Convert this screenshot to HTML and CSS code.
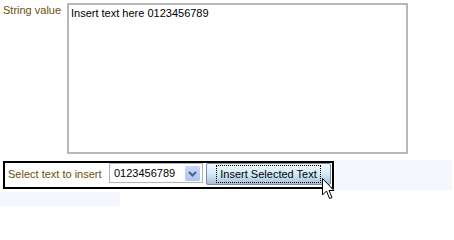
FILE: index.html
```html
<!DOCTYPE html>
<html>
<head>
<meta charset="utf-8">
<link rel="stylesheet" href="styles.css">
</head>
<body>
<div class="page">
  <div class="row1">
    <div class="label top">String value</div>
    <textarea class="area" readonly>Insert text here 0123456789</textarea>
  </div>
  <div class="row2">
    <div class="cell-left">
      <div class="box">
        <div class="label">Select text to insert</div>
        <div class="select">
          <span class="sel-text">0123456789</span>
          <span class="sel-btn">
            <svg width="15" height="15" viewBox="0 0 15 15"><path d="M4 6 L7.5 9.5 L11 6" fill="none" stroke="#4d6185" stroke-width="2"/></svg>
          </span>
        </div>
        <div class="btn"><span class="btn-focus">Insert Selected Text</span></div>
      </div>
    </div>
    <div class="cell-band"></div>
  </div>
  <div class="row3"><div class="band-small"></div></div>
  <svg class="cursor" width="14" height="22" viewBox="0 0 14 22"><path d="M0.5 0.5 V17 L4.5 13 L7.5 20.5 L10 19.5 L7 12.5 H12 Z" fill="#fff" stroke="#000" stroke-width="1"/></svg>
</div>
</body>
</html>
```
FILE: styles.css
```css
html, body {
  margin: 0;
  padding: 0;
  background: #fff;
}
.page {
  position: relative;
  width: 454px;
  height: 206px;
  overflow: hidden;
  font-family: "Liberation Sans", Arial, sans-serif;
  font-size: 11px;
}
.row1 {
  display: flex;
  padding-top: 3px;
}
.label {
  color: #6b4f0a;
  line-height: 13px;
  white-space: nowrap;
  flex-shrink: 0;
}
.label.top {
  width: 67px;
  padding-left: 3px;
  box-sizing: border-box;
  padding-top: 1px;
}
.area {
  flex-shrink: 0;
  width: 341px;
  height: 151px;
  box-sizing: border-box;
  margin: 0;
  border: 2px solid #b8b8b8;
  padding: 2px 2px;
  font-family: "Liberation Sans", Arial, sans-serif;
  font-size: 11px;
  line-height: 13px;
  color: #000;
  resize: none;
  outline: none;
  overflow: hidden;
}
.row2 {
  display: flex;
  margin-top: 6px;
  height: 30px;
}
.cell-left {
  width: 335px;
  flex-shrink: 0;
  padding: 1px 0 0 3px;
  box-sizing: border-box;
}
.box {
  width: 331px;
  height: 28px;
  box-sizing: border-box;
  border: 2px solid #000;
  display: flex;
  align-items: flex-start;
  padding-left: 3px;
}
.box .label {
  margin-top: 5px;
  width: 101px;
}
.select {
  flex-shrink: 0;
  width: 94px;
  height: 20px;
  box-sizing: border-box;
  border: 1px solid #b3b3b3;
  display: flex;
  align-items: center;
  justify-content: space-between;
  padding-left: 4px;
  padding-right: 2px;
  color: #000;
}
.sel-text {
  line-height: 13px;
}
.sel-btn {
  width: 15px;
  height: 15px;
  border-radius: 2px;
  background: linear-gradient(#c9d8fc, #b0c4f2);
  display: flex;
}
.btn {
  flex-shrink: 0;
  margin-left: 3px;
  width: 125px;
  height: 22px;
  box-sizing: border-box;
  border: 1px solid #7a8aa8;
  border-radius: 2px;
  background: linear-gradient(#f2fbfe, #d4ebf6 50%, #a9bfd9);
  display: flex;
  align-items: center;
  justify-content: center;
  color: #000;
}
.btn-focus {
  border: 1px dotted #000;
  padding: 2px 3px 1px;
  line-height: 13px;
}
.cell-band {
  width: 117px;
  flex-shrink: 0;
  background: #f6f6fd;
}
.row3 {
  margin-top: 2px;
}
.band-small {
  width: 120px;
  height: 15px;
  background: #f6f6fd;
}
.cursor {
  position: absolute;
  left: 322px;
  top: 178px;
}
```
